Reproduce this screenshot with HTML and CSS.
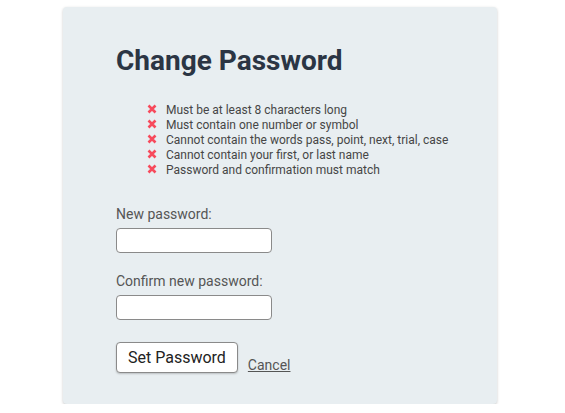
FILE: index.html
```html
<!DOCTYPE html>
<html>
<head>
<meta charset="utf-8">
<link rel="stylesheet" href="styles.css">
</head>
<body>
<div class="card">
  <h1 class="title">Change Password</h1>
  <ul class="rules">
    <li><svg class="x" viewBox="0 0 10 10"><path d="M1.5 1.5L8.5 8.5M8.5 1.5L1.5 8.5"/></svg>Must be at least 8 characters long</li>
    <li><svg class="x" viewBox="0 0 10 10"><path d="M1.5 1.5L8.5 8.5M8.5 1.5L1.5 8.5"/></svg>Must contain one number or symbol</li>
    <li><svg class="x" viewBox="0 0 10 10"><path d="M1.5 1.5L8.5 8.5M8.5 1.5L1.5 8.5"/></svg>Cannot contain the words pass, point, next, trial, case</li>
    <li><svg class="x" viewBox="0 0 10 10"><path d="M1.5 1.5L8.5 8.5M8.5 1.5L1.5 8.5"/></svg>Cannot contain your first, or last name</li>
    <li><svg class="x" viewBox="0 0 10 10"><path d="M1.5 1.5L8.5 8.5M8.5 1.5L1.5 8.5"/></svg>Password and confirmation must match</li>
  </ul>
  <form class="form">
    <label class="field">
      <span class="label">New password:</span>
      <input class="input" type="password">
    </label>
    <label class="field">
      <span class="label">Confirm new password:</span>
      <input class="input" type="password">
    </label>
    <div class="actions">
      <button class="btn" type="button">Set Password</button>
      <a class="cancel" href="#">Cancel</a>
    </div>
  </form>
</div>
</body>
</html>
```

FILE: styles.css
```css
html, body {
  margin: 0;
  padding: 0;
  background: #ffffff;
}
body {
  font-family: Roboto, "Liberation Sans", sans-serif;
  color: #555;
}
.card {
  box-sizing: border-box;
  width: 434px;
  height: 397px;
  margin: 7px 0 0 63px;
  padding: 30px 53px 0 53px;
  background: #e8eef1;
  border-radius: 4px;
  box-shadow: 0 1px 3px rgba(0,0,0,0.22);
}
.title {
  margin: 0;
  font-size: 28px;
  line-height: 48px;
  font-weight: 700;
  color: #2b3544;
}
.rules {
  list-style: none;
  margin: 18px -40px 0 0;
  padding: 0 0 0 31px;
  font-size: 12px;
  line-height: 15px;
  color: #464646;
  white-space: nowrap;
}
.rules li {
  display: flex;
  align-items: center;
}
.x {
  width: 10px;
  height: 10px;
  margin-right: 9px;
  margin-top: -3px;
  flex: none;
}
.x path {
  stroke: #f74a5c;
  stroke-width: 2.6;
  stroke-linecap: butt;
  fill: none;
}
.form {
  margin-top: 26px;
}
.field {
  display: flex;
  flex-direction: column;
  align-items: flex-start;
  margin-bottom: 18px;
}
.label {
  font-size: 14px;
  line-height: 20px;
  color: #555;
  margin-bottom: 4px;
}
.input {
  box-sizing: border-box;
  width: 156px;
  height: 25px;
  margin: 0;
  border: 1px solid #8a8a8a;
  border-radius: 4px;
  background: #fff;
  outline: none;
}
.actions {
  display: flex;
  align-items: flex-end;
  margin-top: 22px;
}
.btn {
  box-sizing: border-box;
  height: 31px;
  padding: 0 11px;
  font-family: Roboto, "Liberation Sans", sans-serif;
  font-size: 16px;
  color: #222;
  background: #fff;
  border: 1px solid #8a8a8a;
  border-radius: 4px;
  box-shadow: 0 1px 2px rgba(0,0,0,0.2);
}
.cancel {
  margin-left: 10px;
  font-size: 14px;
  line-height: 16px;
  color: #555;
  text-decoration: underline;
}
```
